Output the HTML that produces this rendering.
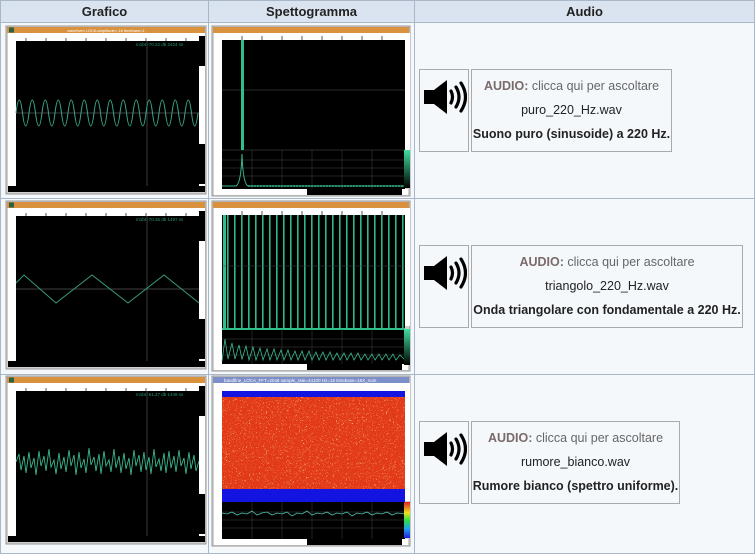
<!DOCTYPE html>
<html><head><meta charset="utf-8"><style>
body{margin:0;width:755px;height:550px;overflow:hidden;background:#fff;font-family:"Liberation Sans",sans-serif;position:relative}
.a{position:absolute;box-sizing:border-box}
.hd{background:#dae4f0;border:1px solid #a8b8c8;font-weight:bold;font-size:13px;text-align:center;line-height:21px;color:#222}
.cell{background:#f5f8fb;border:1px solid #a8b8c8}
.ic{border:1px solid #aaa;background:#f5f8fb}
.ic svg{position:absolute;left:3px;top:9px}
.tx{border:1px solid #aaa;background:#f5f8fb;text-align:center;font-size:12.5px;color:#222}
.tx .l1{color:#666;margin-top:4px}
.tx .l1 b{color:#7a6a6a}
.tx div{height:24px;line-height:24px}
</style></head><body>
<div class="a hd" style="left:0;top:0;width:209px;height:23px">Grafico</div>
<div class="a hd" style="left:208px;top:0;width:207px;height:23px">Spettogramma</div>
<div class="a hd" style="left:414px;top:0;width:341px;height:23px">Audio</div>
<div class="a cell" style="left:0;top:22px;width:209px;height:177px"></div>
<div class="a cell" style="left:208px;top:22px;width:207px;height:177px"></div>
<div class="a cell" style="left:414px;top:22px;width:341px;height:177px"></div>
<div class="a cell" style="left:0;top:198px;width:209px;height:177px"></div>
<div class="a cell" style="left:208px;top:198px;width:207px;height:177px"></div>
<div class="a cell" style="left:414px;top:198px;width:341px;height:177px"></div>
<div class="a cell" style="left:0;top:374px;width:209px;height:180px"></div>
<div class="a cell" style="left:208px;top:374px;width:207px;height:180px"></div>
<div class="a cell" style="left:414px;top:374px;width:341px;height:180px"></div>

<svg class="a" style="left:0;top:0" width="415" height="550" viewBox="0 0 415 550">
<defs>
<g id="win">
<rect x="0" y="0" width="200" height="168" fill="#cfcfcf" stroke="#999"/>
<rect x="1" y="1" width="198" height="6" fill="#d9913e"/>
<rect x="3" y="1.5" width="5" height="5" fill="#2b6040"/>
<rect x="10" y="7" width="183" height="8" fill="#fff"/>
<rect x="2" y="7" width="8" height="153" fill="#fff"/>
<rect x="10" y="15" width="183" height="145" fill="#000"/>
<rect x="193" y="7" width="6" height="153" fill="#fff"/>
<rect x="193" y="10" width="6" height="30" fill="#000"/>
<rect x="193" y="118" width="6" height="40" fill="#000"/>
<rect x="2" y="160" width="197" height="6" fill="#000"/>
<path d="M20 12v3M40 12v3M60 12v3M80 12v3M100 12v3M120 12v3M140 12v3M160 12v3M180 12v3" stroke="#555"/>
</g>
<g id="swin">
<rect x="0" y="0" width="198" height="170" fill="#cfcfcf" stroke="#999"/>
<rect x="1" y="1" width="196" height="6" fill="#d9913e"/>
<rect x="2" y="7" width="8" height="156" fill="#fff"/>
<rect x="10" y="7" width="183" height="7" fill="#fff"/>
<rect x="10" y="14" width="183" height="149" fill="#000"/>
<rect x="193" y="7" width="5" height="118" fill="#fff"/>
<rect x="2" y="163" width="194" height="6" fill="#fff"/>
<rect x="95" y="163" width="95" height="6" fill="#000"/>
<path d="M30 10v4M50 10v4M70 10v4M90 10v4M110 10v4M130 10v4M150 10v4M170 10v4" stroke="#555"/>
</g>
<pattern id="lines" width="7" height="10" patternUnits="userSpaceOnUse" x="225"><rect x="0" width="1.6" height="10" fill="#2fb88a"/></pattern>
<linearGradient id="gb" x1="0" y1="0" x2="0" y2="1"><stop offset="0" stop-color="#40e0a0"/><stop offset="1" stop-color="#000"/></linearGradient>
<linearGradient id="rb" x1="0" y1="0" x2="0" y2="1"><stop offset="0" stop-color="#e02020"/><stop offset=".3" stop-color="#f0e020"/><stop offset=".5" stop-color="#30e040"/><stop offset=".75" stop-color="#20a0f0"/><stop offset="1" stop-color="#2020e0"/></linearGradient>
<filter id="nz" x="0" y="0" width="1" height="1"><feTurbulence baseFrequency="0.7" numOctaves="2" seed="3"/><feColorMatrix values="0 0 0 0 1  0 0 0 0 .75  0 0 0 0 .3  3 0 0 0 -1.2"/></filter>
</defs>

<g transform="translate(6,26)"><use href="#win"/>
<text x="100" y="6" font-size="4" fill="#fff" text-anchor="middle">waveform LOCA amplitude=-16 timebase=1</text>
<path d="M10 87h183M141 15v145" stroke="#555" stroke-width=".7"/>
<path d="M10 87q3.25 -26 6.5 0t6.5 0t6.5 0t6.5 0t6.5 0t6.5 0t6.5 0t6.5 0t6.5 0t6.5 0t6.5 0t6.5 0t6.5 0t6.5 0t6.5 0t6.5 0t6.5 0t6.5 0t6.5 0t6.5 0t6.5 0t6.5 0t6.5 0t6.5 0t6.5 0t6.5 0t6.5 0t6.5 0" stroke="#3aa88a" fill="none"/>
<text x="130" y="20" font-size="4.5" fill="#2a9a7a">m1bt -70.22 db   2424 ss</text>
</g>
<g transform="translate(6,201)"><use href="#win"/>
<path d="M10 88h183M141 15v145" stroke="#555" stroke-width=".7"/>
<polyline points="10,82 18,74 50,102 86,74 122,102 158,74 193,102" stroke="#3a9a7a" fill="none"/>
<text x="130" y="20" font-size="4.5" fill="#2a9a7a">m1bt -70.35 db   1497 ss</text>
</g>
<g transform="translate(6,376)"><use href="#win"/>
<path d="M141 15v145" stroke="#555" stroke-width=".7"/>
<polyline points="10,86 13,78 15,94 18,80 20,97 23,76 25,92 28,82 30,99 33,75 35,90 38,80 40,95 43,73 45,91 48,84 50,98 53,77 55,93 58,81 60,96 63,74 65,90 68,79 70,99 73,76 75,92 78,83 80,97 83,72 85,89 88,81 90,95 93,78 95,98 98,75 100,90 103,84 105,96 108,73 110,92 113,80 115,97 118,77 120,93 123,82 125,99 128,74 130,90 133,79 135,96 138,76 140,94 143,81 145,98 148,73 150,91 153,83 155,95 158,77 160,97 163,75 165,92 168,80 170,96 173,74 175,90 178,82 180,98 183,76 185,93 188,79 190,95 193,85" stroke="#3ab890" fill="none" stroke-width=".9"/>
<text x="130" y="20" font-size="4.5" fill="#2a9a7a">m1bt -61.27 db   1449 ss</text>
</g>

<g transform="translate(212,26)"><use href="#swin"/>
<path d="M10 64h183M10 124h183" stroke="#555" stroke-width=".6"/>
<rect x="29" y="14" width="3" height="110" fill="#2fbf8a"/>
<path d="M10 134h183M10 142h183M10 150h183M40 124v39M70 124v39M100 124v39M130 124v39M160 124v39" stroke="#444" stroke-width=".5"/>
<path d="M10 160 L24 160 Q29 158 30 128 Q31 158 36 160 L193 160" stroke="#3ab890" fill="none"/>
<path d="M36 160h157" stroke="#2a8a6a" stroke-dasharray="2 1" stroke-width="2"/>
<rect x="192" y="124" width="6" height="38" fill="url(#gb)"/>
</g>
<g transform="translate(212,201)"><use href="#swin"/>
<rect x="10" y="14" width="183" height="114" fill="url(#lines)"/>
<rect x="11" y="14" width="3" height="114" fill="#2fbf8a"/>
<path d="M10 128h183" stroke="#2fbf8a" stroke-width="2"/>
<path d="M10 65h183M10 138h183M10 146h183M10 154h183M40 128v35M70 128v35M100 128v35M130 128v35M160 128v35" stroke="#444" stroke-width=".5"/>
<polyline points="10,160 13,138 16,158 20,142 23,158 27,144 30,158 34,145 37,159 41,146 44,159 48,147 51,159 55,148 58,159 62,148 65,159 69,149 72,159 76,149 79,159 83,150 86,159 90,150 93,159 97,150 100,159 104,151 107,159 111,151 114,159 118,151 121,159 125,152 128,159 132,152 135,159 139,152 142,159 146,152 149,159 153,153 156,159 160,153 163,159 167,153 170,159 174,153 177,159 181,153 184,159 188,154 193,159" stroke="#3ab890" fill="none" stroke-width=".8"/>
<rect x="192" y="128" width="6" height="36" fill="url(#gb)"/>
</g>
<g transform="translate(212,376)">
<rect x="0" y="0" width="198" height="170" fill="#cfcfcf" stroke="#999"/>
<rect x="1" y="1" width="196" height="6" fill="#7d8fc8"/>
<text x="12" y="6" font-size="4.5" fill="#fff">bandfine_LOCA_FFT=2048 sample_rate=44100 Hz=16 timebase=16X_nom</text>
<rect x="2" y="7" width="8" height="156" fill="#fff"/>
<rect x="10" y="7" width="183" height="8" fill="#fff"/>
<rect x="10" y="15" width="183" height="6" fill="#1414e0"/>
<rect x="10" y="21" width="183" height="92" fill="#e23a18"/>
<rect x="10" y="21" width="183" height="92" filter="url(#nz)"/>
<rect x="10" y="113" width="183" height="13" fill="#1414e0"/>
<rect x="10" y="126" width="183" height="37" fill="#000"/>
<path d="M10 136h183M10 144h183M10 152h183M40 126v37M70 126v37M100 126v37M130 126v37M160 126v37" stroke="#444" stroke-width=".5"/>
<polyline points="10,137 15,138 20,136 25,139 30,137 35,138 40,135 45,139 50,137 55,136 60,139 65,137 70,138 75,136 80,140 85,137 90,138 95,135 100,139 105,137 110,138 115,136 120,139 125,137 130,138 135,136 140,140 145,137 150,138 155,136 160,139 165,137 170,138 175,136 180,139 185,137 193,138" stroke="#4ac0b0" fill="none" stroke-width=".8"/>
<rect x="193" y="7" width="5" height="118" fill="#fff"/>
<rect x="192" y="126" width="6" height="36" fill="url(#rb)"/>
<rect x="2" y="163" width="194" height="6" fill="#fff"/>
<rect x="95" y="163" width="95" height="6" fill="#000"/>
</g>
</svg>

<div class="a ic" style="left:419px;top:69px;width:50px;height:83px"><svg width="44" height="36" viewBox="0 0 44 36"><path d="M1 11h10l13-10v34l-13-10H1z" fill="#000"/><path d="M28 12q3 6 0 12M33 8q6 10 0 20M38 4q9 14 0 28" stroke="#000" stroke-width="3.2" fill="none" stroke-linecap="round"/></svg></div>
<div class="a tx" style="left:471px;top:69px;width:201px;height:83px"><div class="l1"><b>AUDIO:</b> clicca qui per ascoltare</div><div>puro_220_Hz.wav</div><div><b>Suono puro (sinusoide) a 220 Hz.</b></div></div>

<div class="a ic" style="left:419px;top:245px;width:50px;height:83px"><svg width="44" height="36" viewBox="0 0 44 36"><path d="M1 11h10l13-10v34l-13-10H1z" fill="#000"/><path d="M28 12q3 6 0 12M33 8q6 10 0 20M38 4q9 14 0 28" stroke="#000" stroke-width="3.2" fill="none" stroke-linecap="round"/></svg></div>
<div class="a tx" style="left:471px;top:245px;width:272px;height:83px"><div class="l1"><b>AUDIO:</b> clicca qui per ascoltare</div><div>triangolo_220_Hz.wav</div><div><b>Onda triangolare con fondamentale a 220 Hz.</b></div></div>

<div class="a ic" style="left:419px;top:421px;width:50px;height:83px"><svg width="44" height="36" viewBox="0 0 44 36"><path d="M1 11h10l13-10v34l-13-10H1z" fill="#000"/><path d="M28 12q3 6 0 12M33 8q6 10 0 20M38 4q9 14 0 28" stroke="#000" stroke-width="3.2" fill="none" stroke-linecap="round"/></svg></div>
<div class="a tx" style="left:471px;top:421px;width:209px;height:83px"><div class="l1"><b>AUDIO:</b> clicca qui per ascoltare</div><div>rumore_bianco.wav</div><div><b>Rumore bianco (spettro uniforme).</b></div></div>
</body></html>
